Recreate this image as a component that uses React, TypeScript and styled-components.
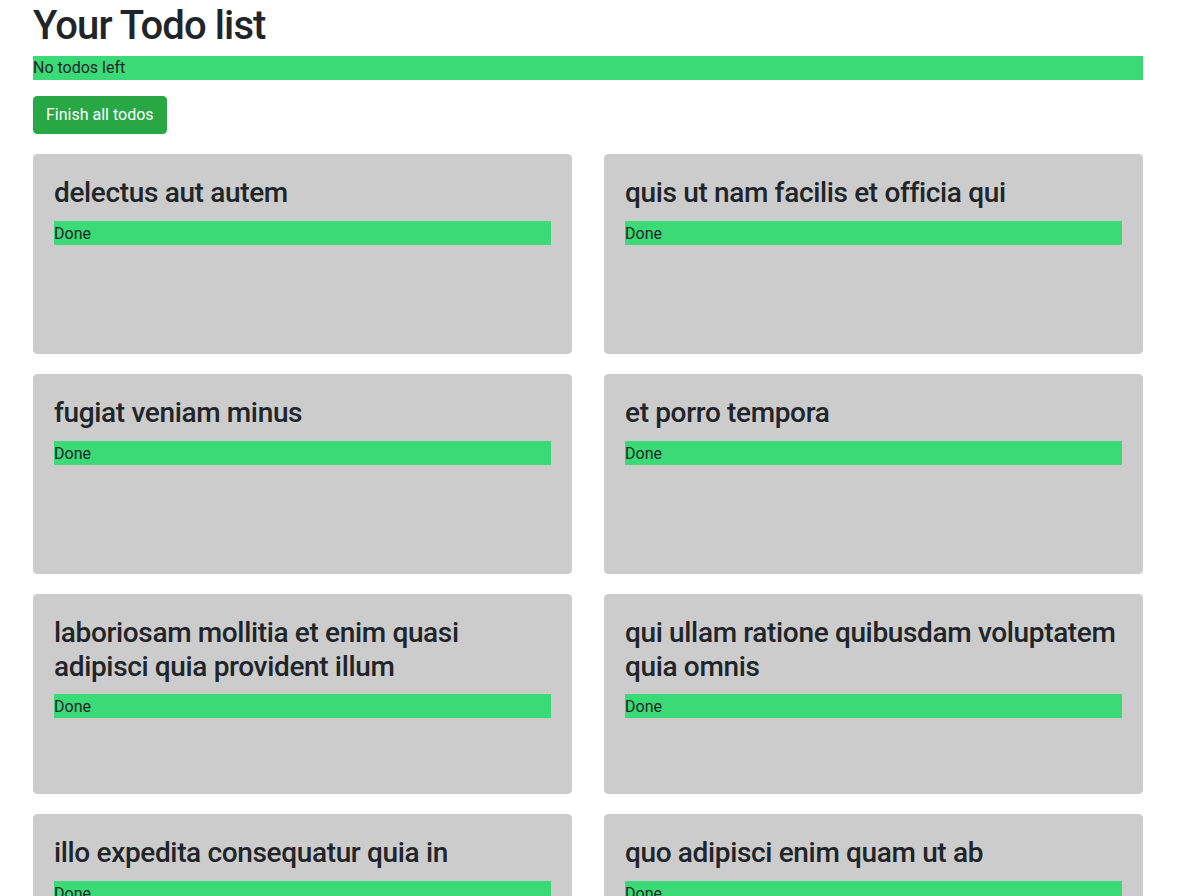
import React from "react";
import styled, { createGlobalStyle } from "styled-components";

const GlobalStyle = createGlobalStyle`
  html, body { margin: 0; padding: 0; background: #fff; }
  body {
    font-family: Roboto, "Liberation Sans", Arial, sans-serif;
    font-size: 16px;
    line-height: 1.5;
    color: #212529;
  }
  * { box-sizing: border-box; }
`;

const Page = styled.div`
  width: 1110px;
  margin-left: 33px;
`;

const Title = styled.h1`
  margin: 0 0 8px;
  padding-top: 2px;
  height: 48px;
  font-size: 40px;
  font-weight: 500;
  line-height: 48px;
  letter-spacing: -0.9px;
`;

const Status = styled.div`
  background: #3adb76;
  height: 24px;
  line-height: 24px;
  font-size: 16px;
  margin-bottom: 16px;
`;

const Button = styled.button`
  display: inline-block;
  font-family: inherit;
  font-size: 16px;
  line-height: 24px;
  padding: 6px 12px;
  color: #fff;
  background: #28a745;
  border: 1px solid #28a745;
  border-radius: 4px;
  margin-bottom: 20px;
  cursor: pointer;
`;

const Grid = styled.div`
  display: grid;
  grid-template-columns: 1fr 1fr;
  column-gap: 32px;
  row-gap: 20px;
`;

const Card = styled.div`
  height: 200px;
  background: #cccccc;
  border: 1px solid #cecece;
  border-radius: 4px;
  padding: 20px;
`;

const CardTitle = styled.h3`
  margin: 0 0 12px;
  padding-top: 1px;
  font-size: 28px;
  font-weight: 500;
  line-height: 1.2;
  letter-spacing: -0.35px;
`;

const Done = styled.div`
  background: #3adb76;
  height: 24px;
  line-height: 25px;
  font-size: 16px;
  margin-top: -1px;
`;

const todos = [
  "delectus aut autem",
  "quis ut nam facilis et officia qui",
  "fugiat veniam minus",
  "et porro tempora",
  "laboriosam mollitia et enim quasi adipisci quia provident illum",
  "qui ullam ratione quibusdam voluptatem quia omnis",
  "illo expedita consequatur quia in",
  "quo adipisci enim quam ut ab",
];

export default function App() {
  return (
    <>
      <GlobalStyle />
      <Page>
        <Title>Your Todo list</Title>
        <Status>No todos left</Status>
        <Button>Finish all todos</Button>
        <Grid>
          {todos.map((t) => (
            <Card key={t}>
              <CardTitle>{t}</CardTitle>
              <Done>Done</Done>
            </Card>
          ))}
        </Grid>
      </Page>
    </>
  );
}
